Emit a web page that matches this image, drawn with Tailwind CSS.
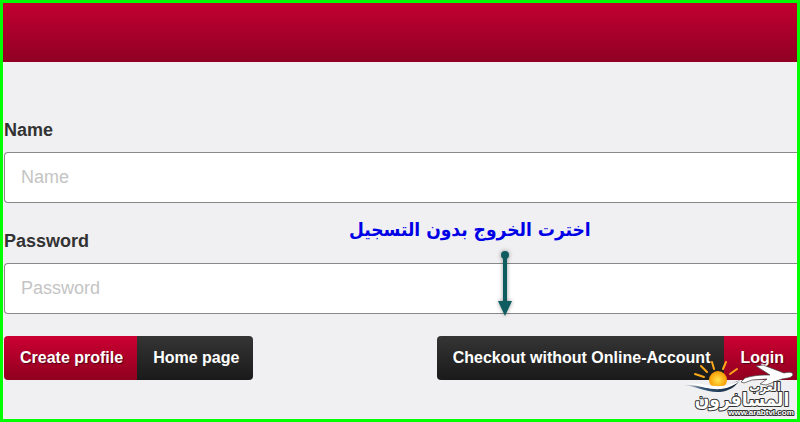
<!doctype html>
<html lang="en">
  <head>
    <meta charset="UTF-8" />
    <meta name="viewport" content="width=device-width, initial-scale=1" />
    <title>Login</title>
    <script src="https://cdn.jsdelivr.net/npm/@tailwindcss/browser@4"></script>
  </head>
  <body class="bg-[#f0f0f2] font-['Liberation_Sans',Arial,sans-serif] text-lg text-[#333]">
    <div class="relative min-h-screen overflow-hidden border-3 border-[#00ff00]">
      <header class="h-[59px] bg-linear-to-b from-[#c20030] to-[#900024]"></header>

      <form class="pt-[54px] pl-px">
        <label for="name" class="block h-9 leading-7 font-bold">Name</label>
        <input
          id="name"
          type="text"
          placeholder="Name"
          class="block h-[51px] w-full rounded-l border border-r-0 border-[#888] bg-white px-4 placeholder:text-[#c4c4c4]"
        />

        <label for="password" class="mt-6 block h-9 leading-7 font-bold">Password</label>
        <input
          id="password"
          type="password"
          placeholder="Password"
          class="block h-[51px] w-full rounded-l border border-r-0 border-[#888] bg-white px-4 placeholder:text-[#c4c4c4]"
        />

        <div class="mt-[22px] -mr-px flex justify-between text-base font-bold text-white">
          <div class="flex">
            <button type="button" class="h-11 rounded-l bg-linear-to-b from-[#cc0033] to-[#90001f] pr-3.5 pl-4 text-shadow-[1px_1px_1px_#0008]">Create profile</button>
            <button type="button" class="h-11 rounded-r bg-linear-to-b from-[#353535] to-[#1a1a1a] pr-3.5 pl-4">Home page</button>
          </div>
          <div class="flex">
            <button type="button" class="h-11 rounded-l bg-linear-to-b from-[#353535] to-[#1a1a1a] pr-3.5 pl-4">Checkout without Online-Account</button>
            <button type="submit" class="h-11 bg-linear-to-b from-[#cc0033] to-[#90001f] pr-3.5 pl-4 text-shadow-[1px_1px_1px_#0008]">Login</button>
          </div>
        </div>
      </form>

      <!-- note with arrow -->
      <p lang="ar" dir="rtl" class="absolute top-[212px] left-[346px] font-['DejaVu_Sans_Condensed','DejaVu_Sans',sans-serif] text-[19px] font-bold whitespace-nowrap text-[#0000e6]">اخترت الخروج بدون التسجيل</p>
      <svg class="absolute top-[242px] left-[492px] drop-shadow-[0_0_2px_#0006]" width="20" height="72" viewBox="0 0 20 72" fill="#0f5c60">
        <circle cx="10" cy="10" r="4" />
        <path d="M8 10h4v46h5L10 71 3 56h5z" />
      </svg>

      <!-- watermark logo -->
      <svg class="absolute right-0 bottom-0 font-['DejaVu_Sans_Condensed','DejaVu_Sans',sans-serif]" width="117" height="62" viewBox="0 0 117 62" role="img" aria-label="العرب المسافرون">
        <defs>
          <linearGradient id="swoosh">
            <stop offset="0" stop-color="#456" stop-opacity="0" />
            <stop offset=".35" stop-color="#357" />
            <stop offset="1" stop-color="#123" />
          </linearGradient>
          <radialGradient id="sun">
            <stop offset="0" stop-color="#ffe34d" />
            <stop offset="1" stop-color="#f79a00" />
          </radialGradient>
        </defs>
        <path d="M27 15l-6-6M34 12l-2-7M43 12l3-7M50 17l7-5M24 20l-9-3" stroke="#f9a81a" stroke-width="2" stroke-linecap="round" />
        <circle cx="38" cy="23" r="9" fill="url(#sun)" />
        <path d="M2 28c16-1 24 5 38 3 8-1 14-6 20-8-4 6-10 11-20 12-14 1-22-6-38-7z" fill="url(#swoosh)" />
        <path d="M8 27c14-1 24 3 34 2 8-1 13-4 19-6-6 5-12 8-20 9-12 1-20-4-33-5z" fill="#fff" />
        <path d="M65 21c10-3 17-3 25-3L76 9l7-1 21 8c4-1 8-1 9 1 0 4-6 4-11 5l-16 6-6-1 7-5-15 1-8 3-3-1 2-2z" fill="#fff" stroke="#444" stroke-width=".7" />
        <g fill="#fff" stroke="#333" stroke-width="2" stroke-linejoin="round" paint-order="stroke" font-weight="bold" text-anchor="middle">
          <text x="85" y="34" font-size="12">العرب</text>
          <text x="62" y="49" font-size="19">المسافرون</text>
          <text x="81" y="58" font-size="8" font-family="Liberation Sans">www.arabtvl.com</text>
        </g>
      </svg>
    </div>
  </body>
</html>
